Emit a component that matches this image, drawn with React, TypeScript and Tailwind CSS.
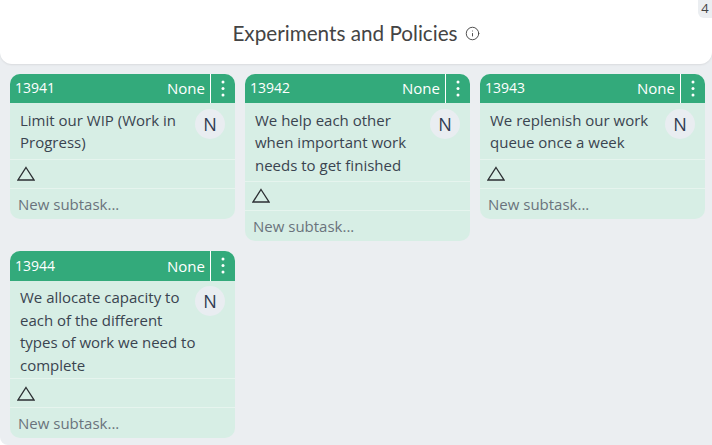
import { Info } from 'lucide-react'

interface CardProps {
  id: number
  title: string
  bodyClass: string
}

const cards: CardProps[] = [
  { id: 13941, title: 'Limit our WIP (Work in Progress)', bodyClass: 'h-[56.5px]' },
  { id: 13942, title: 'We help each other when important work needs to get finished', bodyClass: 'h-[78.5px]' },
  { id: 13943, title: 'We replenish our work queue once a week', bodyClass: 'h-[56.5px]' },
  { id: 13944, title: 'We allocate capacity to each of the different types of work we need to complete', bodyClass: 'h-[98.5px]' },
]

function Card({ id, title, bodyClass }: CardProps) {
  return (
    <div className="w-[225px] overflow-hidden rounded-[10px] bg-[#d7eee5] text-[15px] leading-[22.5px] text-[#3a4450]">
      <div className="flex h-[29.3px] items-center bg-[#33aa7b] text-white">
        <span className="ml-[5px] flex-1 text-[14px]">{id}</span>
        <span className="mr-[5px] text-[15px]">None</span>
        <span className="flex h-full w-[25px] items-center justify-center border-l border-white">
          <svg width="4" height="17" viewBox="0 0 4 17" fill="currentColor">
            <circle cx="2" cy="2" r="1.5" />
            <circle cx="2" cy="8.5" r="1.5" />
            <circle cx="2" cy="15" r="1.5" />
          </svg>
        </span>
      </div>
      <div className={`border-b border-[#e6f4ee] pt-[5.5px] pr-[10px] pl-[10px] ${bodyClass}`}>
        <span className="float-right ml-[4px] flex h-[30px] w-[30px] items-center justify-center rounded-full bg-[#e9edf1] text-[18px] text-[#2f3b52]">
          N
        </span>
        <p>{title}</p>
      </div>
      <div className="flex h-[29px] items-center border-b border-[#e6f4ee] pl-[7px]">
        <svg width="18" height="15" viewBox="0 0 18 15" fill="none" stroke="#2c2f33" strokeWidth="1.3">
          <path d="M9 1.5 L17 14 H1 Z" />
        </svg>
      </div>
      <div className="flex h-[30px] items-center pl-[8px] pt-[1px] text-[#6a737c]">New subtask...</div>
    </div>
  )
}

export default function App() {
  return (
    <div
      className="relative h-[445px] w-[712px] overflow-hidden rounded-bl-[8px] bg-[#ebeef1]"
      style={{ fontFamily: '"Open Sans", sans-serif' }}
    >
      <div className="flex h-[64px] items-center justify-center gap-[7px] rounded-b-[12px] bg-white pt-[3px] shadow-[0_1px_2px_rgba(0,0,0,0.08)]">
        <span className="text-[20.7px] text-[#444]" style={{ fontFamily: 'Lato, sans-serif' }}>
          Experiments and Policies
        </span>
        <Info size={15} strokeWidth={1.5} className="text-[#444]" />
      </div>
      <span className="absolute right-0 top-0 flex h-[18px] w-[14px] items-center justify-center rounded-bl-[6px] bg-[#ebeef1] text-[13px] text-[#444]">
        4
      </span>
      <div className="flex flex-wrap items-start gap-x-[10px] gap-y-[10.5px] pt-[10px] pl-[10px]">
        {cards.map(c => (
          <Card key={c.id} {...c} />
        ))}
      </div>
    </div>
  )
}
